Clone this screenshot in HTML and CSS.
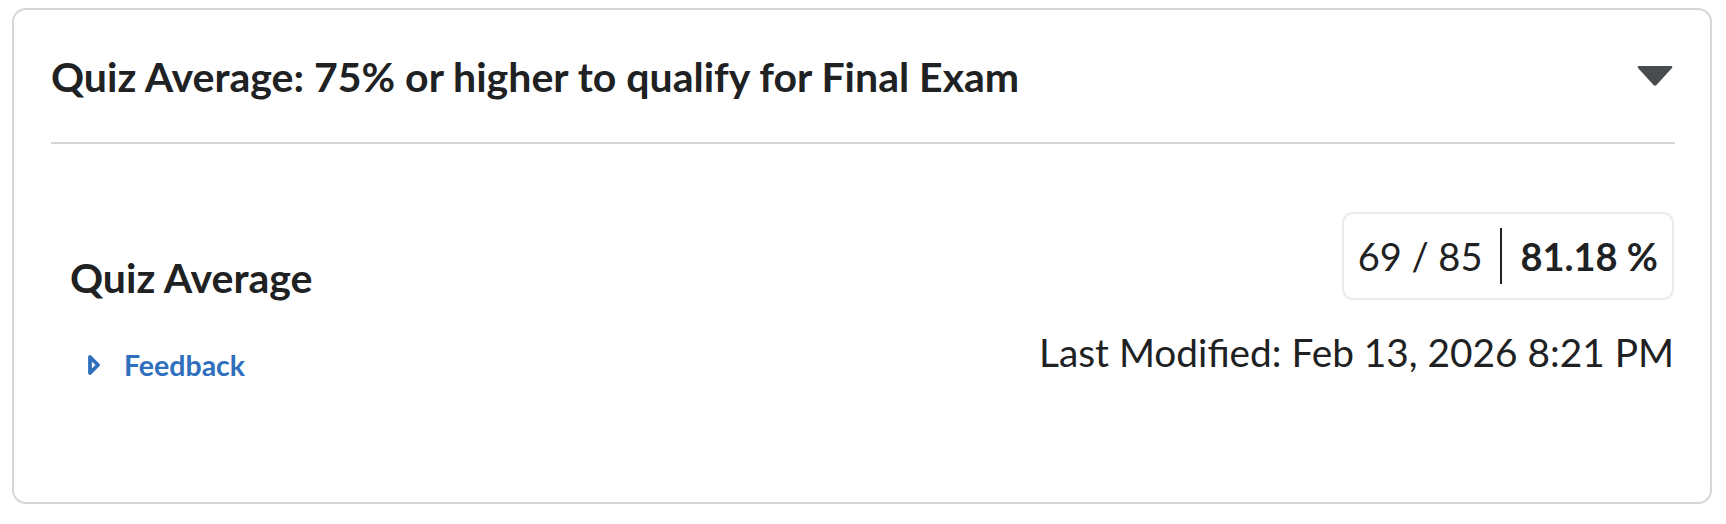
FILE: index.html
```html
<!DOCTYPE html>
<html lang="en">
<head>
    <meta charset="UTF-8">
    <meta name="viewport" content="width=device-width, initial-scale=1.0">
    <link rel="stylesheet" href="styles.css">
    <title>Quiz Average</title>
</head>
<body>
    <div class="card">
        <div class="card-header">
            <h2 class="card-title">Quiz Average: 75% or higher to qualify for Final Exam</h2>
            <svg class="caret" width="36" height="20" viewBox="0 0 36 20">
                <path d="M2 0 H34 Q36 0 35 2 L19.5 19 Q18 20.5 16.5 19 L1 2 Q0 0 2 0 Z" fill="#494c4e"/>
            </svg>
        </div>

        <div class="grade-row">
            <div class="grade-info">
                <h3 class="grade-name">Quiz Average</h3>
                <a class="feedback" href="#">
                    <svg class="feedback-icon" width="12" height="20" viewBox="0 0 12 20">
                        <path d="M2 2 L10 10 L2 18 Z" fill="none" stroke="#2f6fbd" stroke-width="3.8" stroke-linejoin="round"/>
                    </svg>
                    Feedback
                </a>
            </div>

            <div class="grade-score">
                <div class="score-box">
                    <span class="points">69 / 85</span>
                    <span class="divider"></span>
                    <span class="percent">81.18 %</span>
                </div>
                <div class="modified">Last Modified: Feb 13, 2026 8:21 PM</div>
            </div>
        </div>
    </div>
</body>
</html>
```

FILE: styles.css
```css
body {
    margin: 0;
    background-color: #ffffff;
    font-family: Lato, "Noto Sans", sans-serif;
    color: #202122;
}

.card {
    box-sizing: border-box;
    width: 1700px;
    height: 496px;
    margin: 8px 0 0 12px;
    padding: 0 35px 0 37px;
    border: 2px solid #d3d8dd;
    border-radius: 14px;
}

.card-header {
    display: flex;
    align-items: center;
    justify-content: space-between;
    height: 132px;
    border-bottom: 2px solid #d3d8dd;
}

.card-title {
    margin: 0;
    font-size: 41px;
    font-weight: 700;
}

.caret {
    display: block;
    margin-right: 2px;
}

.grade-row {
    display: flex;
    justify-content: space-between;
    align-items: flex-start;
}

.grade-info {
    padding-left: 19px;
    padding-top: 109px;
}

.grade-name {
    margin: 0;
    font-size: 41px;
    font-weight: 700;
}

.feedback {
    display: flex;
    align-items: center;
    gap: 24px;
    margin-top: 46px;
    padding-left: 18px;
    font-size: 28.5px;
    font-weight: 700;
    color: #2f6fbd;
    text-decoration: none;
}

.grade-score {
    display: flex;
    flex-direction: column;
    align-items: flex-end;
    padding-top: 68px;
}

.score-box {
    display: flex;
    align-items: center;
    box-sizing: border-box;
    height: 88px;
    padding: 0 14px;
    margin-right: 1px;
    border: 2px solid #ebebeb;
    border-radius: 11px;
    font-size: 38px;
}

.divider {
    width: 2px;
    height: 56px;
    margin: 0 18px;
    background-color: #202122;
}

.percent {
    font-weight: 700;
}

.modified {
    margin-top: 29px;
    margin-right: 1px;
    font-size: 38.8px;
}
```
